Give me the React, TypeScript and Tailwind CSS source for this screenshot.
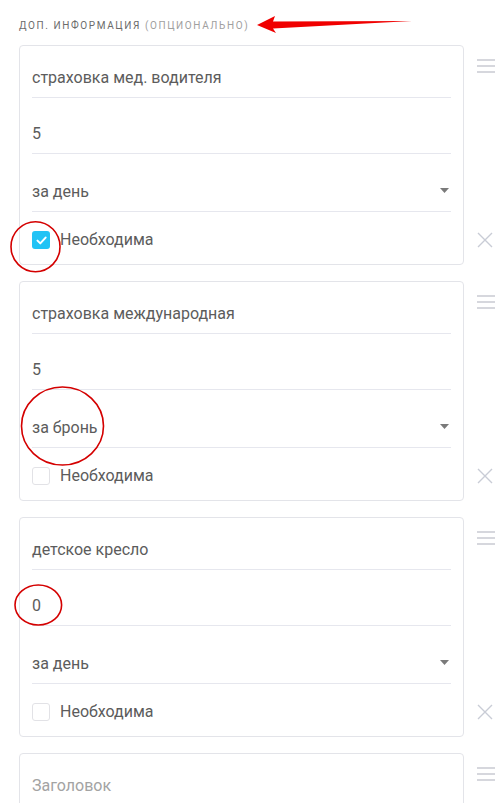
import React from 'react';

interface Extra {
  title: string;
  price: string;
  period: string;
  required: boolean;
}

const extras: Extra[] = [
  { title: 'страховка мед. водителя', price: '5', period: 'за день', required: true },
  { title: 'страховка международная', price: '5', period: 'за бронь', required: false },
  { title: 'детское кресло', price: '0', period: 'за день', required: false },
];

function Field({ value, placeholder, select }: { value?: string; placeholder?: string; select?: boolean }) {
  return (
    <div className="flex h-[40px] items-end justify-between border-b border-[#e6e7ee] pb-[7px]">
      <span className={`text-[16px] leading-[24px] ${value ? 'text-[#5c5c5c]' : 'text-[#a3a3a3]'}`}>
        {value || placeholder}
      </span>
      {select && (
        <svg width="9" height="5" viewBox="0 0 9 5" className="mb-[11px] mr-[2px]">
          <path d="M0 0h9L4.5 5z" fill="#7a7a7a" />
        </svg>
      )}
    </div>
  );
}

function Checkbox({ checked }: { checked: boolean }) {
  if (checked) {
    return (
      <span className="flex h-[18px] w-[18px] items-center justify-center rounded-[3px] bg-[#22c3f5]">
        <svg width="11" height="9" viewBox="0 0 11 9">
          <path d="M1.5 4.6l2.8 2.8L9.6 1.6" fill="none" stroke="#fff" strokeWidth="2" strokeLinecap="round" strokeLinejoin="round" />
        </svg>
      </span>
    );
  }
  return <span className="h-[18px] w-[18px] rounded-[3px] border border-[#e2e2e6] bg-white" />;
}

function Hamburger() {
  return (
    <svg width="18" height="14" viewBox="0 0 18 14">
      <rect x="0" y="0" width="18" height="2" fill="#d6d7dd" />
      <rect x="0" y="6" width="18" height="2" fill="#d6d7dd" />
      <rect x="0" y="12" width="18" height="2" fill="#d6d7dd" />
    </svg>
  );
}

function Cross() {
  return (
    <svg width="16" height="16" viewBox="0 0 16 16">
      <path d="M1 1l14 14M15 1L1 15" stroke="#c9ccd6" strokeWidth="1.4" />
    </svg>
  );
}

function ExtraCard({ item }: { item: Extra }) {
  return (
    <div className="flex">
      <div className="h-[220px] w-[446px] rounded-[4px] border border-[#e3e4e9] bg-white px-[12px] pt-[12px]">
        <Field value={item.title} />
        <div className="mt-[16px]">
          <Field value={item.price} />
        </div>
        <div className="mt-[18px]">
          <Field value={item.period} select />
        </div>
        <div className="mt-[19px] flex items-center gap-[10px]">
          <Checkbox checked={item.required} />
          <span className="text-[16px] leading-[18px] text-[#5c5c5c]">Необходима</span>
        </div>
      </div>
      <div className="flex flex-col justify-between pb-[17px] pl-[13px] pt-[14px]">
        <Hamburger />
        <Cross />
      </div>
    </div>
  );
}

export default function App() {
  return (
    <div className="relative h-[803px] w-[495px] overflow-hidden bg-white font-['Roboto',sans-serif]">
      <div className="pl-[19px] pt-[19px]">
        {/* заголовок секции */}
        <div className="h-[14px] text-[10px] uppercase leading-[14px] tracking-[1.6px]">
          <span className="text-[#6b6b6b]">Доп. информация</span>{' '}
          <span className="text-[#a0a0a0]">(опционально)</span>
        </div>

        <div className="mt-[12px] flex flex-col gap-[16px]">
          {extras.map((item) => (
            <ExtraCard key={item.title} item={item} />
          ))}

          {/* пустая карточка */}
          <div className="flex">
            <div className="h-[80px] w-[446px] rounded-[4px] border border-[#e3e4e9] bg-white px-[12px] pt-[12px]">
              <Field placeholder="Заголовок" />
            </div>
            <div className="pl-[13px] pt-[14px]">
              <Hamburger />
            </div>
          </div>
        </div>
      </div>

      {/* пометки поверх скриншота */}
      <svg className="pointer-events-none absolute left-0 top-0" width="495" height="803" viewBox="0 0 495 803">
        <path d="M257 25 L275 16 L273 21.5 L412 21 L273 28.5 L276 33 Z" fill="#f00000" />
        <ellipse cx="35.5" cy="246.7" rx="24.5" ry="25" fill="none" stroke="#d40000" strokeWidth="1.6" />
        <ellipse cx="62.5" cy="426" rx="41" ry="39" fill="none" stroke="#d40000" strokeWidth="1.6" />
        <ellipse cx="38.3" cy="605" rx="23.3" ry="20" fill="none" stroke="#d40000" strokeWidth="1.6" />
      </svg>
    </div>
  );
}
